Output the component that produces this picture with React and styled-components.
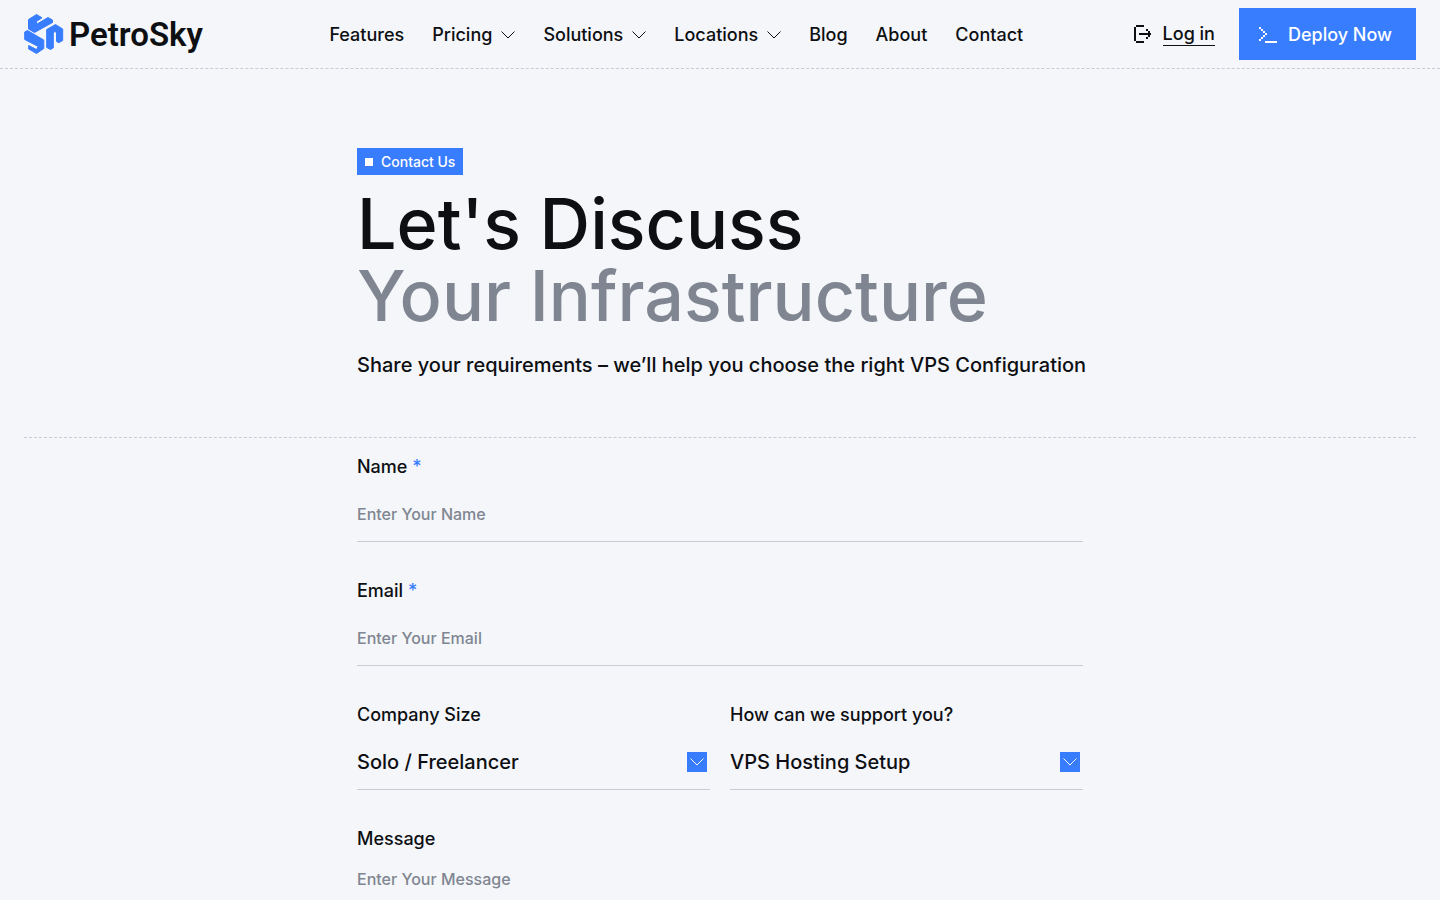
import React from 'react'
import styled, { createGlobalStyle } from 'styled-components'

const GlobalStyle = createGlobalStyle`
    *, *::before, *::after {
        box-sizing: border-box;
    }
    body {
        margin: 0;
        background-color: #f4f6fa;
        color: #0d0f12;
        font-family: Inter, "Liberation Sans", sans-serif;
        font-weight: 500;
    }
    button, input, select, textarea {
        font: inherit;
        color: inherit;
    }
`
const Header = styled.header`
    display: flex;
    align-items: center;
    justify-content: space-between;
    padding: 8px 24px;
    border-bottom: 1px dashed #c9ccd3;
`
const Logo = styled.a`
    display: flex;
    align-items: center;
    gap: 5px;
    width: 196px;
    height: 52px;
    color: inherit;
    text-decoration: none;
    font-family: Roboto, "Liberation Sans", sans-serif;
    font-size: 33px;
    font-weight: 600;
`
const Nav = styled.nav`
    display: flex;
    align-items: center;
    gap: 28px;
    padding-top: 2px;
`
const NavItem = styled.a`
    display: flex;
    align-items: center;
    gap: 9px;
    color: inherit;
    font-size: 18px;
    line-height: 24px;
    text-decoration: none;
`
const Actions = styled.div`
    display: flex;
    align-items: center;
    gap: 24px;
`
const Login = styled.a`
    display: flex;
    align-items: center;
    gap: 10px;
    color: inherit;
    font-size: 18px;
    line-height: 22px;
    text-decoration: none;

    span {
        border-bottom: 1px solid #0d0f12;
    }
`
const Deploy = styled.button`
    display: flex;
    align-items: center;
    gap: 10px;
    height: 52px;
    padding: 0 24px 0 19px;
    border: none;
    background-color: #397dff;
    color: white;
    font-size: 18px;
    cursor: pointer;
`
const Main = styled.main`
    padding: 0 24px;
`
const Hero = styled.section`
    padding: 79px 0 59px;
    border-bottom: 1px dashed #c9ccd3;
`
const Column = styled.div`
    max-width: 726px;
    margin: 0 auto;
`
const Tag = styled.span`
    display: flex;
    align-items: center;
    gap: 8px;
    width: fit-content;
    height: 27px;
    padding: 0 8px;
    background-color: #397dff;
    color: white;
    font-size: 14px;

    &::before {
        content: "";
        width: 8px;
        height: 8px;
        background-color: white;
    }
`
const Title = styled.h1`
    margin: 13px 0 20px;
    font-size: 70px;
    line-height: 72px;
    font-weight: 500;

    span {
        display: block;
        color: #808691;
    }
`
const Subtitle = styled.p`
    margin: 0;
    font-size: 20px;
    line-height: 26px;
    white-space: nowrap;
`
const Form = styled.form`
    display: grid;
    grid-template-columns: 1fr 1fr;
    gap: 36px 20px;
    padding: 16px 0;
`
const Field = styled.div`
    grid-column: ${props => props.$wide ? "1 / -1" : "auto"};
`
const Label = styled.label`
    display: block;
    font-size: 18px;
    line-height: 26px;

    span {
        color: #397dff;
    }
`
const Input = styled.input`
    display: block;
    width: 100%;
    height: 52px;
    margin-top: 10px;
    padding: 0 0 4px;
    border: none;
    border-bottom: 1px solid #c9ccd3;
    border-radius: 0;
    background: none;
    font-size: 16px;
    outline: none;

    &::placeholder {
        color: #808691;
        opacity: 1;
    }
`
const SelectBox = styled.div`
    display: flex;
    align-items: center;
    height: 52px;
    margin-top: 10px;
    padding: 0 3px 4px 0;
    border-bottom: 1px solid #c9ccd3;
`
const Select = styled.select`
    flex: 1;
    height: 46px;
    padding: 0;
    border: none;
    background: none;
    appearance: none;
    font-size: 20px;
    outline: none;
`
const SelectArrow = styled.span`
    display: flex;
    align-items: center;
    justify-content: center;
    width: 20px;
    height: 20px;
    background-color: #397dff;
    color: white;
    pointer-events: none;
`
const TextArea = styled.textarea`
    display: block;
    width: 100%;
    height: 120px;
    margin-top: 15px;
    padding: 0;
    border: none;
    border-bottom: 1px solid #c9ccd3;
    background: none;
    font-size: 16px;
    line-height: 24px;
    resize: none;
    outline: none;

    &::placeholder {
        color: #808691;
        opacity: 1;
    }
`

const Chevron = () => (
    <svg width="14" height="8" viewBox="0 0 14 8" fill="none" stroke="currentColor" aria-hidden="true">
        <path d="M0.500 0.500l6.500 6.500 6.500-6.500" />
    </svg>
)

const LogoMark = () => (
    <svg width="40" height="42" viewBox="0 0 40 42" fill="#397dff" stroke="#397dff" strokeWidth="1" strokeLinejoin="round" aria-hidden="true">
        <path d="M4.500 6.500L12.500 1.500L18 4.800L12 8.700L13.300 10.800L24 4.500L28.500 7V9.500L10.500 19.500L4.500 16Z" />
        <path d="M0.700 19L3.500 17.500L19.800 27V35.500L12.500 40.500L4.700 36V32.500L12.500 36.500L14.200 33.500L0.700 26.500Z" />
        <path d="M22.700 16.500L31.500 11.500L38.700 16V27.500L34.800 29.700L32.500 28.400V19.500L31 18.500L29.300 19.800V34.800L26.500 36.500L22.700 34.500Z" />
    </svg>
)

const LoginIcon = () => (
    <svg width="20" height="20" viewBox="0 0 20 20" fill="currentColor" aria-hidden="true">
        <path d="M3 1h8v2H3zM1 3h2v14H1zM3 17h8v2H3zM6 9h12v2H6zM15 7h2v6h-2zM13 5h2v2h-2zM13 13h2v2h-2z" />
    </svg>
)

const TerminalIcon = () => (
    <svg width="20" height="20" viewBox="0 0 20 20" fill="currentColor" aria-hidden="true">
        <path d="M1 3h2v2H1zM3 5h2v2H3zM5 7h2v2H5zM7 9h2v2H7zM5 11h2v2H5zM3 13h2v2H3zM1 15h2v2H1zM7 17h12v2H7z" />
    </svg>
)

const links = [
    { text: "Features" },
    { text: "Pricing", menu: true },
    { text: "Solutions", menu: true },
    { text: "Locations", menu: true },
    { text: "Blog" },
    { text: "About" },
    { text: "Contact" },
]

const App = () => {
    return (
        <>
            <GlobalStyle />
            <Header>
                <Logo href="/"><LogoMark />PetroSky</Logo>
                <Nav>
                    {links.map(link => (
                        <NavItem key={link.text} href={"/" + link.text.toLowerCase()}>
                            {link.text}
                            {link.menu && <Chevron />}
                        </NavItem>
                    ))}
                </Nav>
                <Actions>
                    <Login href="/login"><LoginIcon /><span>Log in</span></Login>
                    <Deploy type="button"><TerminalIcon />Deploy Now</Deploy>
                </Actions>
            </Header>
            <Main>
                <Hero>
                    <Column>
                        <Tag>Contact Us</Tag>
                        <Title>Let's Discuss<span>Your Infrastructure</span></Title>
                        <Subtitle>Share your requirements – we’ll help you choose the right VPS Configuration</Subtitle>
                    </Column>
                </Hero>
                <Column>
                    <Form>
                        <Field $wide>
                            <Label htmlFor="name">Name <span>*</span></Label>
                            <Input id="name" type="text" placeholder="Enter Your Name" required />
                        </Field>
                        <Field $wide>
                            <Label htmlFor="email">Email <span>*</span></Label>
                            <Input id="email" type="email" placeholder="Enter Your Email" required />
                        </Field>
                        <Field>
                            <Label htmlFor="size">Company Size</Label>
                            <SelectBox>
                                <Select id="size">
                                    <option>Solo / Freelancer</option>
                                </Select>
                                <SelectArrow><Chevron /></SelectArrow>
                            </SelectBox>
                        </Field>
                        <Field>
                            <Label htmlFor="support">How can we support you?</Label>
                            <SelectBox>
                                <Select id="support">
                                    <option>VPS Hosting Setup</option>
                                </Select>
                                <SelectArrow><Chevron /></SelectArrow>
                            </SelectBox>
                        </Field>
                        <Field $wide>
                            <Label htmlFor="message">Message</Label>
                            <TextArea id="message" placeholder="Enter Your Message" />
                        </Field>
                    </Form>
                </Column>
            </Main>
        </>
    )
}

export default App
